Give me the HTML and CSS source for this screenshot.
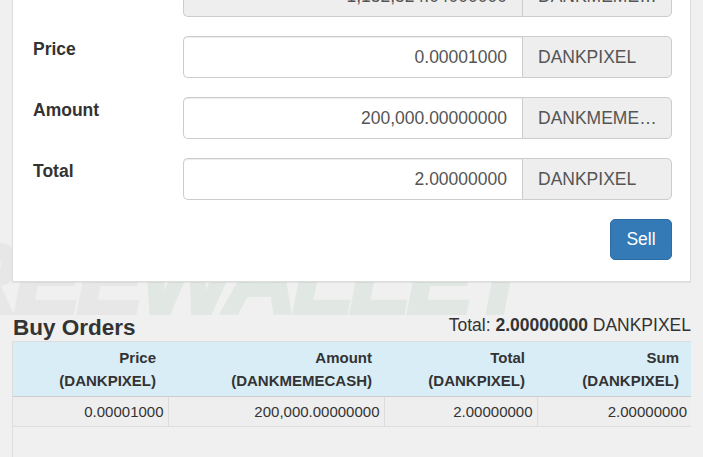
FILE: index.html
```html
<!DOCTYPE html>
<html lang="en">
<head>
  <meta charset="UTF-8">
  <title>Exchange - Sell</title>
  <link rel="stylesheet" href="styles.css">
</head>
<body>
  <div class="watermark"><span class="wm-free">FREE</span><span class="wm-wallet">WALLET</span></div>

  <div class="page">
    <!-- Форма продажи -->
    <div class="panel">
      <div class="form-row">
        <label></label>
        <div class="input-group">
          <div class="input readonly">1,152,524.04000000</div>
          <div class="addon">DANKMEMECASH</div>
        </div>
      </div>
      <div class="form-row">
        <label>Price</label>
        <div class="input-group">
          <div class="input">0.00001000</div>
          <div class="addon">DANKPIXEL</div>
        </div>
      </div>
      <div class="form-row">
        <label>Amount</label>
        <div class="input-group">
          <div class="input">200,000.00000000</div>
          <div class="addon">DANKMEMECASH</div>
        </div>
      </div>
      <div class="form-row">
        <label>Total</label>
        <div class="input-group">
          <div class="input">2.00000000</div>
          <div class="addon">DANKPIXEL</div>
        </div>
      </div>
      <div class="actions">
        <button class="btn">Sell</button>
      </div>
    </div>

    <!-- Заявки на покупку -->
    <div class="orders-head">
      <h4>Buy Orders</h4>
      <div class="orders-total">Total: <strong>2.00000000</strong> DANKPIXEL</div>
    </div>
    <div class="table-wrap">
      <table class="orders">
        <thead>
          <tr>
            <th class="c1">Price<br>(DANKPIXEL)</th>
            <th class="c2">Amount<br>(DANKMEMECASH)</th>
            <th class="c3">Total<br>(DANKPIXEL)</th>
            <th class="c4">Sum<br>(DANKPIXEL)</th>
          </tr>
        </thead>
        <tbody>
          <tr>
            <td>0.00001000</td>
            <td>200,000.00000000</td>
            <td>2.00000000</td>
            <td>2.00000000</td>
          </tr>
        </tbody>
      </table>
    </div>
  </div>
</body>
</html>
```

FILE: styles.css
```css
body { margin:0; background:#f0f0f0; color:#333; font-family:"Liberation Sans", Arial, sans-serif; font-size:17.5px; line-height:1.42857; position:relative; overflow:hidden; height:457px; }

/* Фоновый логотип */
.watermark { position:absolute; left:-111px; top:228px; font-size:100px; font-weight:bold; font-style:italic; letter-spacing:-4px; line-height:1; z-index:0; white-space:nowrap; }
.wm-free { color:#e7e7e7; -webkit-text-stroke:4px #e7e7e7; }
.wm-wallet { color:#e1e8e3; -webkit-text-stroke:4px #e1e8e3; }

.page { position:relative; z-index:1; padding:0 12px; }

.panel { background:#fff; border:1px solid #ddd; border-top:none; margin-top:-25px; padding:0 18px 21px 20px; box-shadow:0 1px 1px rgba(0,0,0,0.05); }

.form-row { display:grid; grid-template-columns:150px 1fr; margin-bottom:19px; }
.form-row label { font-weight:bold; padding-top:1px; }

.input-group { display:flex; height:42px; }
.input { flex:1; border:1px solid #ccc; border-right:none; border-radius:5px 0 0 5px; background:#fff; color:#555; text-align:right; padding:0 15px; line-height:40px; box-shadow:inset 0 1px 1px rgba(0,0,0,0.075); }
.input.readonly { background:#eee; }
.addon { width:126px; border:1px solid #ccc; border-radius:0 5px 5px 0; background:#eee; color:#555; padding:0 7px 0 15px; line-height:40px; white-space:nowrap; overflow:hidden; text-overflow:ellipsis; }

.actions { display:flex; justify-content:flex-end; }
.btn { font-family:inherit; font-size:17.5px; color:#fff; background:#337ab7; border:1px solid #2e6da4; border-radius:5px; height:41px; width:62px; cursor:pointer; }

.orders-head { display:flex; justify-content:space-between; align-items:flex-end; margin-top:28px; height:31px; }
.orders-head h4 { margin:0 0 0 1px; font-size:22.5px; line-height:1.1; }
.orders-total { padding-bottom:3px; }

.table-wrap { border-left:1px solid #ddd; border-top:1px solid #ddd; height:115px; }
.orders { width:100%; border-collapse:collapse; table-layout:fixed; font-size:15px; }
.orders th { background:#d9edf7; text-align:right; font-weight:bold; padding:4px 12px 4px 0; line-height:23px; border-bottom:1px solid #ccc; }
.orders .c1 { width:143px; }
.orders .c2 { width:204px; }
.orders .c3 { width:141px; }
.orders td { background:#eee; text-align:right; padding:0 4px 0 0; height:29px; border-right:1px solid #ddd; border-bottom:1px solid #ddd; }
.orders td:last-child { border-right:none; }
```
